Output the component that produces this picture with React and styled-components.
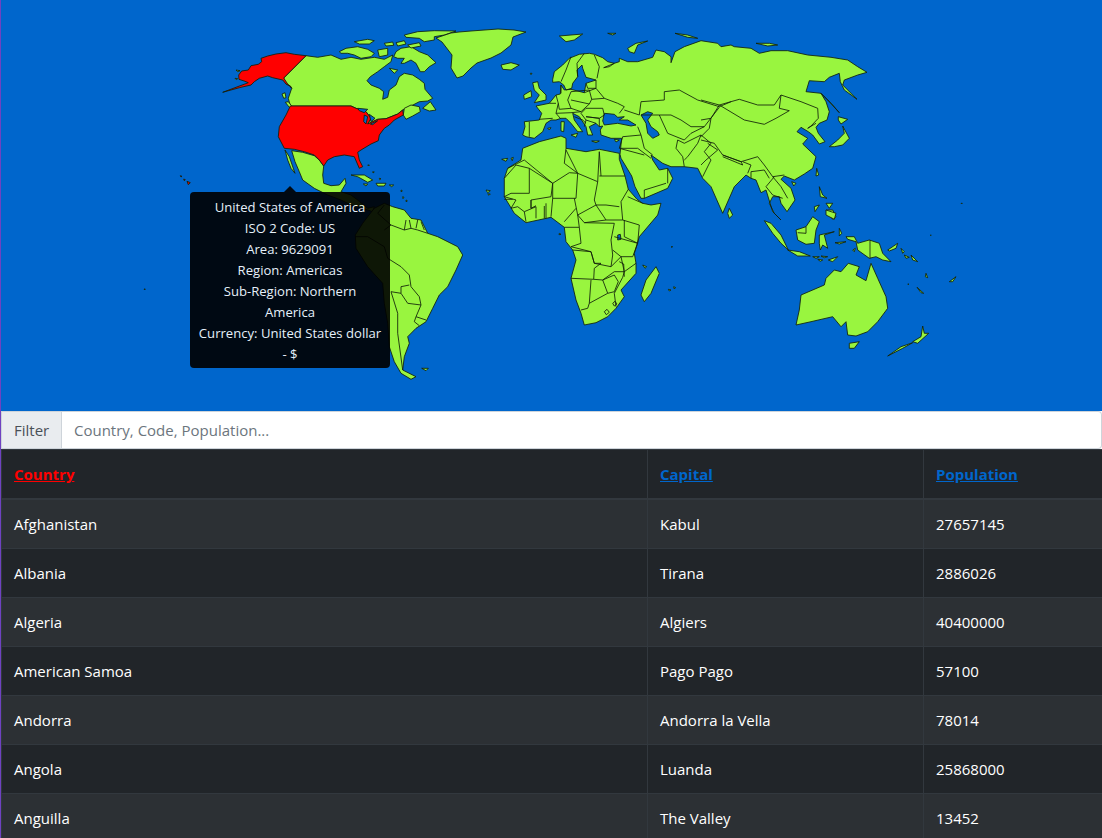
import React from "react";
import styled, { createGlobalStyle } from "styled-components";

const GlobalStyle = createGlobalStyle`
  html, body { margin: 0; padding: 0; height: 100%; overflow: hidden; }
  body { font-family: "Open Sans", "Liberation Sans", sans-serif; font-size: 15px; line-height: 24px; color: #212529; background: #fff; }
`;

const Page = styled.div`
  border-left: 1px solid #6f42c1;
  height: 838px;
  overflow: hidden;
`;

const MapPanel = styled.div`
  position: relative;
  height: 411px;
  background: #0066cc;
`;

const MapSvg = styled.svg`
  display: block;
  width: 100%;
  height: 100%;
`;

const Land = styled.polygon`
  fill: ${(p) => (p.$active ? "#ff0000" : "#99f53f")};
  stroke: #10200a;
  stroke-width: 0.85;
  stroke-linejoin: round;
`;

const Water = styled.polygon`
  fill: #0066cc;
  stroke: #10200a;
  stroke-width: 0.85;
  stroke-linejoin: round;
`;

const Border = styled.polyline`
  fill: none;
  stroke: #10200a;
  stroke-width: 0.85;
  stroke-linejoin: round;
`;

const Tooltip = styled.div`
  position: absolute;
  left: 189px;
  top: 192px;
  width: 200px;
  box-sizing: border-box;
  padding: 5px 8px 3px;
  background: #000;
  opacity: 0.9;
  border-radius: 4px;
  color: #fff;
  font-size: 13.1px;
  line-height: 21px;
  text-align: center;
  &::before {
    content: "";
    position: absolute;
    left: 94px;
    top: -6px;
    border-left: 6px solid transparent;
    border-right: 6px solid transparent;
    border-bottom: 6px solid #000;
  }
`;

const FilterGroup = styled.div`
  display: flex;
  height: 38px;
  box-sizing: border-box;
`;

const FilterLabel = styled.span`
  display: flex;
  align-items: center;
  box-sizing: border-box;
  width: 61px;
  padding: 0 12px;
  background: #e9ecef;
  border: 1px solid #ced4da;
  color: #495057;
`;

const FilterInput = styled.input`
  flex: 1;
  min-width: 0;
  box-sizing: border-box;
  padding: 6px 12px;
  border: 1px solid #ced4da;
  border-left: 0;
  border-radius: 0 4px 4px 0;
  background: #fff;
  color: #495057;
  font: inherit;
  outline: none;
  &::placeholder { color: #6c757d; opacity: 1; }
`;

const Table = styled.table`
  width: 1101px;
  table-layout: fixed;
  border-collapse: collapse;
  background: #212529;
  color: #fff;
`;

const HeadCell = styled.th`
  box-sizing: border-box;
  padding: 12px;
  text-align: left;
  font-weight: 700;
  border: 1px solid #32383e;
  border-bottom-width: 2px;
  width: ${(p) => p.$width}px;
`;

const SortLink = styled.a`
  color: ${(p) => (p.$active ? "#ff0000" : "#0066cc")};
  text-decoration: underline;
`;

const Row = styled.tr`
  background: ${(p) => (p.$striped ? "#2c3034" : "#212529")};
`;

const Cell = styled.td`
  padding: 12px;
  border: 1px solid #32383e;
`;

// traced from the 3x crops, so each group of points has its own origin
const at = (ox, oy) => (s) =>
  s.trim().split(/\s+/).map((p) => {
    const [x, y] = p.split(",");
    return `${(ox + x / 3).toFixed(1)},${(oy + y / 3).toFixed(1)}`;
  }).join(" ");

const na = at(170, 20);
const sa = at(170, 180);
const eu = at(470, 20);
const as = at(700, 40);
const af = at(480, 140);
const oc = at(760, 200);

const usa = [
  na("405,107 370,103 345,98 315,102 290,108 270,115 272,125 262,133 240,137 232,150 212,153 203,165 204,178 222,184 232,188 195,202 155,217 205,203 240,195 250,185 265,175 290,168 305,173 335,180 345,192 358,198 362,205 350,192 338,174"),
  na("358,258 540,258 555,265 585,275 600,295 590,312 620,298 645,296 680,282 695,270 697,285 670,300 655,315 640,325 625,345 622,362 600,372 570,390 560,397 565,420 575,440 565,445 550,410 520,405 490,410 470,420 458,438 445,420 430,405 400,395 370,388 340,385 322,350 325,320 345,285"),
  na("28,467 33,469 30,471"),
  na("38,477 43,479 40,482"),
  na("48,484 58,488 52,494"),
];

const land = [
  // north america
  na("405,107 440,112 480,105 510,118 540,112 570,118 610,112 640,118 665,105 660,125 640,140 620,155 598,170 588,182 600,195 625,205 638,215 635,238 650,232 655,210 675,195 685,170 700,160 725,165 745,178 760,190 762,208 785,235 770,243 745,245 720,258 695,270 680,282 645,296 620,298 590,312 600,295 585,275 555,265 540,258 358,258 352,235 362,205 358,198 345,192 338,174"),
  na("697,285 700,265 720,255 745,260 748,275 725,288 705,298"),
  na("755,265 778,245 795,270 775,273"),
  na("333,222 342,218 345,233 338,235"),
  na("343,247 352,245 365,262 355,262"),
  na("362,392 395,397 430,407 445,420 458,438 455,465 458,490 480,497 505,495 522,475 525,490 510,515 540,525 560,540 590,565 610,560 605,575 590,570 560,560 540,555 510,540 470,525 430,505 395,480 385,455 372,425"),
  na("342,390 355,410 372,460 360,445 350,420"),
  na("505,95 525,85 560,80 590,88 610,100 600,110 570,115 550,105 530,100 510,100"),
  na("668,110 675,95 690,85 720,80 745,95 770,105 795,128 775,140 760,155 748,155 735,130 720,120 700,130 690,130 700,115 680,115"),
  na("700,45 740,35 790,32 855,33 820,45 790,50 790,60 760,65 745,55 705,52"),
  na("550,65 590,58 610,62 595,72 565,72"),
  na("640,70 665,66 668,76 645,78"),
  na("675,68 700,62 705,72 680,78"),
  na("710,75 745,68 750,78 720,84"),
  na("620,90 650,85 650,105 625,110"),
  na("655,145 680,150 670,160"),
  na("540,465 580,465 605,480 590,487 560,470"),
  na("615,490 645,490 640,498 620,498"),
  na("577,492 590,492 585,498"),
  na("655,495 668,495 662,500"),
  // greenland, page coordinates
  "435,38 450,33 458,32 470,31 497,29 513,30 525,32 512,37 510,45 500,53 490,58 476,63 470,68 462,76 456,78 450,68 451,55 441,42",
  // south america
  sa("610,85 640,70 665,80 700,90 720,115 750,120 770,160 800,170 860,200 875,225 855,270 830,320 805,345 785,385 765,425 735,445 710,470 715,490 700,530 695,570 735,590 720,598 690,580 670,545 655,500 650,430 640,370 635,310 590,260 555,205 553,165 575,130 590,110"),
  sa("752,565 772,565 765,572"),
  // eurasia
  [
    eu("155,345 162,320 160,305 205,300 212,280 195,258 235,250 255,225 268,222 270,195 280,210 300,208 340,218 345,190 375,180 345,172 335,145 333,135 318,150 320,170 305,190 302,205 285,210 278,195 265,185 245,187 245,178 250,155 275,135 295,115 325,103 355,100 370,103 395,113 410,125 430,130 415,140 398,143 430,130 445,125 445,115 470,125 500,125 545,112 555,90 580,95 600,110 600,128 612,95 640,80 690,62 740,70 750,80 780,75"),
    as("100,20 150,25 175,40 210,32 260,32 320,45 390,52 440,60 470,80 498,97 470,105 430,120 425,135 468,178 430,150 418,125 415,100 385,112 370,125 325,122 315,155 360,160 375,185 385,215 378,240 355,250 345,262 352,280 372,305 355,312 335,285 322,275 300,262 288,275 320,295 305,312 345,350 335,385 310,402 280,420 250,408 240,418 270,445 282,480 258,515 240,490 235,470 215,470 205,490 220,520 240,540 215,515 195,450 180,458 165,420 150,415 135,405 100,440 65,520 30,440 5,415"),
    eu("680,445 640,440 600,440 575,430 540,405 545,420 565,450 590,445 605,475 590,505 520,535 510,535 492,500 482,468 450,415 447,403 452,355 420,355 390,345 388,330 395,318 385,320 375,310 355,320 365,345 350,345 345,320 325,290 305,280 310,300 335,335 325,335 320,335 300,310 285,295 270,295 255,300 240,300 225,310 215,335 190,355 165,350"),
  ].join(" "),
  eu("90,135 120,128 145,135 120,150 95,148"),
  eu("185,188 200,185 205,205 225,225 225,240 190,248 205,225 190,210"),
  eu("158,225 180,212 182,230 160,238"),
  eu("265,48 335,42 310,60 285,65"),
  eu("470,85 495,70 530,63 500,75 490,100 475,95"),
  eu("410,40 435,40 425,45"),
  eu("612,40 650,45 680,55 650,52"),
  eu("270,305 280,305 278,335 270,333"),
  eu("300,345 320,340 315,352"),
  eu("362,363 385,363 375,368"),
  eu("430,358 445,360 435,366"),
  eu("230,325 240,323 235,330"),
  as("165,10 205,10 230,15 200,18"),
  as("360,160 385,185 415,218 395,195"),
  as("412,230 440,238 420,252 412,240"),
  as("425,258 445,295 425,315 400,320 385,320 410,300 430,280"),
  as("347,385 353,405 345,408"),
  as("272,425 285,430 278,438"),
  as("85,505 95,525 85,535 80,520"),
  as("355,440 365,465 378,475 358,470"),
  as("375,490 395,490 385,505"),
  as("375,510 395,510 405,530 395,538"),
  as("340,500 355,495 342,515"),
  // africa
  af("125,25 175,5 240,-12 255,-5 255,25 315,35 355,28 415,40 415,58 432,108 442,148 468,178 485,190 510,195 540,190 530,225 475,290 460,340 465,370 465,400 420,450 430,470 405,505 380,530 345,548 310,555 300,520 285,480 270,415 285,360 275,330 255,305 250,262 210,232 135,248 100,220 70,170 70,115 80,85 120,60"),
  af("525,380 535,400 510,460 490,485 480,465 495,420"),
  // oceania and the islands north of it
  oc("10,62 30,70 60,105 82,150 60,130 35,100"),
  oc("80,150 115,155 148,168 110,168"),
  oc("105,90 135,80 155,50 175,65 165,90 160,130 135,133 110,120"),
  oc("175,105 220,95 190,105 200,145 185,135 178,150 175,130"),
  oc("155,170 175,170 165,175"),
  oc("170,178 185,180 178,184"),
  oc("180,168 200,170 190,173"),
  oc("202,180 230,170 215,185"),
  oc("235,85 242,100 235,108"),
  oc("222,128 255,125 235,132"),
  oc("255,110 280,110 290,130 325,120 355,130 365,160 390,185 365,180 345,170 325,175 290,150 285,125 260,118"),
  oc("380,150 410,130 405,145 385,153"),
  oc("420,145 430,155 425,160"),
  oc("430,165 445,172 435,175"),
  oc("450,165 470,185 455,180"),
  oc("495,220 500,233 493,230"),
  oc("468,262 488,280 480,278"),
  oc("565,245 585,230 575,245"),
  oc("275,150 283,145 280,155"),
  oc("195,30 225,40 220,58 195,45"),
  oc("105,375 115,330 120,285 190,255 195,235 220,210 240,215 262,190 295,200 285,225 315,242 330,190 350,235 375,290 380,325 350,365 320,395 285,408 260,405 255,365 240,380 215,350 150,365"),
  oc("265,430 295,425 280,445 265,445"),
  oc("485,378 490,400 503,400 470,430 455,425 480,410"),
  oc("455,428 425,445 380,468 420,440"),
];

const water = [
  na("560,265 590,268 580,278 565,272"),
  na("580,285 590,290 585,312 578,305"),
  na("595,283 612,295 600,305"),
  na("598,312 620,302 605,314"),
  eu("395,303 400,280 430,283 440,292 460,290 445,300 470,300 495,315 480,318 440,310 400,315"),
  eu("510,285 530,275 545,280 530,300 540,320 560,335 565,345 545,355 530,340 525,310"),
  af("410,285 418,283 420,298 410,300"),
];

const borders = [
  // south america
  sa("640,150 660,135 700,150 720,145 740,150 770,160"),
  sa("705,120 700,150"), sa("715,120 720,145"), sa("740,120 735,145"), sa("750,125 760,150"),
  sa("640,75 620,100 660,135"),
  sa("553,170 590,170 640,200 650,235"),
  sa("650,235 690,260 715,285 720,320 745,350 750,375 735,410 765,420"),
  sa("690,320 715,315"), sa("690,320 690,340 710,370 750,375"),
  sa("660,335 690,340"), sa("660,335 680,400 680,460 695,570"),
  sa("735,410 730,425 745,437"),
  // europe
  eu("370,105 385,140 378,175"), eu("375,180 375,205 400,235 440,250 460,260 445,280"),
  eu("505,285 460,270"), eu("505,285 510,245 580,240 580,215 625,210 680,240 745,260 780,245"),
  eu("510,285 565,285 600,285 630,300 660,320 700,320 745,262"),
  eu("565,285 590,340 640,360 660,340 700,320"),
  eu("620,360 615,385 635,410 640,440"),
  eu("500,320 510,345 520,385 545,405"),
  eu("620,360 640,370 690,345 680,370 650,410 640,420"),
  eu("690,345 720,370 700,395 720,420 695,470"),
  eu("510,345 455,350 445,385 520,405"),
  eu("450,385 500,385 540,415"),
  eu("520,535 520,510 585,490"), eu("590,445 590,490"),
  eu("345,190 350,205 375,205"), eu("340,218 375,205"),
  eu("255,225 262,250 265,268 300,265 290,240 300,215"),
  eu("300,215 355,210 362,238 355,252 300,240"),
  eu("205,298 245,295"), eu("262,250 255,280 268,295"), eu("255,280 300,278"),
  eu("300,265 330,275 355,252"), eu("345,265 395,265 400,285 385,295 345,290"),
  eu("345,290 385,295 385,320"), eu("362,238 400,235"), eu("330,280 345,300 340,320"),
  eu("175,305 175,350"), eu("270,195 270,220"), eu("300,278 330,275"), eu("345,300 375,310"),
  eu("310,290 335,300 345,310"), eu("345,265 330,280"), eu("235,250 255,250"),
  eu("300,110 285,150 270,185"), eu("340,100 318,130 320,170"),
  // asia
  as("0,180 55,195 115,178 170,195 220,195 240,165 300,185 350,205 352,235 330,258 320,265"),
  as("55,195 130,240 190,253 225,235 265,212 235,205 240,165"),
  as("320,265 345,250"), as("0,300 40,310 65,345 120,365 170,350 190,375"),
  as("150,415 150,395 190,390 205,415"), as("190,375 215,410 250,405"),
  as("220,410 195,440 215,465 245,475"), as("0,240 30,235 55,195"),
  as("65,345 120,365 125,375 65,350"), as("125,365 150,375 140,400"),
  as("0,290 25,265 30,235"), as("20,310 50,330 15,360 0,375"),
  as("215,410 240,440 260,475"),
  // africa
  af("130,60 110,70 80,85"), af("70,115 105,75 145,85 145,160 90,160 70,170"),
  af("130,60 215,130 265,98 290,100 255,30"),
  af("255,25 250,70 290,100 350,125 355,35"), af("355,108 432,108"), af("355,35 360,108"),
  af("145,85 215,130 210,170 150,180 150,205"),
  af("215,130 215,175 285,175 290,100"), af("350,125 340,180 345,195 290,225 280,175"),
  af("345,195 375,240 425,240 420,185 442,148"), af("345,195 375,195 415,200"),
  af("440,170 485,190"), af("425,240 475,255"),
  af("475,255 470,310 430,290 430,240"),
  af("290,225 310,248 375,240"), af("215,175 210,230"), af("285,205 250,245"),
  af("250,262 295,262 290,225"), af("310,248 400,250 390,300 395,345 390,380 340,370 330,335 270,320"),
  af("295,262 300,310 270,320"), af("400,290 470,310 455,350 420,350 395,330"),
  af("275,330 330,335 340,370 360,370 340,385 338,418 270,415"),
  af("338,418 365,420 400,395 430,395 420,350 390,380"),
  af("465,370 430,395 425,412 400,460 405,500"),
  af("365,420 400,405 412,425 400,455 380,460 365,420"),
  af("330,420 325,490 380,460"), af("325,490 320,505 300,510"),
  af("370,515 378,508 385,517 376,524 370,515"), af("395,490 402,484 408,492 400,498 395,490"),
  af("70,170 105,180 90,205 110,200 130,215 135,245"), af("130,215 165,200 165,235"),
  af("150,205 165,197"), af("190,198 190,235"), af("195,190 195,235"), af("150,180 150,205"),
  af("70,178 95,178"), af("415,365 428,372 430,410"),
  // oceania
  oc("327,120 327,175"), oc("135,80 135,100 110,98"),
];

const dots = [
  na("590,435 595,435 593,438"), na("605,455 610,456 606,459"), na("625,475 630,476 626,479"),
  na("690,510 694,512 691,516"), na("695,530 699,532 696,536"), na("705,540 709,542 706,546"),
  na("192,175 200,176 196,179"), na("195,150 207,152 200,155"),
  af("62,58 80,55 75,64"), af("90,55 97,52 94,62"), af("15,150 28,152 20,158"), af("20,162 28,162 24,166"),
  af("235,280 240,283 234,284"), af("485,375 497,380 492,385"), af("562,448 570,450 565,453"), af("578,440 584,443 579,446"),
  af("570,320 575,320 572,322"),
  oc("600,10 604,10 602,12"), oc("440,252 444,252 442,254"), oc("508,105 511,105 509,107"),
  eu("178,160 183,160 180,164"),
  at(143, 289)("0,0 4,0 2,3"),
];

const WorldMap = () => (
  <MapSvg viewBox="0 0 1101 411" aria-hidden="true">
    {land.map((pts, i) => <Land key={i} points={pts} />)}
    {usa.map((pts, i) => <Land key={i} $active points={pts} />)}
    {water.map((pts, i) => <Water key={i} points={pts} />)}
    {borders.map((pts, i) => <Border key={i} points={pts} />)}
    {dots.map((pts, i) => <Land key={i} points={pts} />)}
  </MapSvg>
);

const countries = [
  ["Afghanistan", "Kabul", "27657145"],
  ["Albania", "Tirana", "2886026"],
  ["Algeria", "Algiers", "40400000"],
  ["American Samoa", "Pago Pago", "57100"],
  ["Andorra", "Andorra la Vella", "78014"],
  ["Angola", "Luanda", "25868000"],
  ["Anguilla", "The Valley", "13452"],
];

export default function App() {
  return (
    <Page>
      <GlobalStyle />
      <MapPanel>
        <WorldMap />
        <Tooltip>
          <div>United States of America</div>
          <div>ISO 2 Code: US</div>
          <div>Area: 9629091</div>
          <div>Region: Americas</div>
          <div>Sub-Region: Northern America</div>
          <div>Currency: United States dollar - $</div>
        </Tooltip>
      </MapPanel>
      <FilterGroup>
        <FilterLabel>Filter</FilterLabel>
        <FilterInput placeholder="Country, Code, Population..." />
      </FilterGroup>
      <Table>
        <thead>
          <tr>
            <HeadCell $width={646}><SortLink $active href="#country">Country</SortLink></HeadCell>
            <HeadCell $width={276}><SortLink href="#capital">Capital</SortLink></HeadCell>
            <HeadCell $width={179}><SortLink href="#population">Population</SortLink></HeadCell>
          </tr>
        </thead>
        <tbody>
          {countries.map(([name, capital, pop], i) => (
            <Row key={name} $striped={i % 2 === 0}>
              <Cell>{name}</Cell>
              <Cell>{capital}</Cell>
              <Cell>{pop}</Cell>
            </Row>
          ))}
        </tbody>
      </Table>
    </Page>
  );
}
